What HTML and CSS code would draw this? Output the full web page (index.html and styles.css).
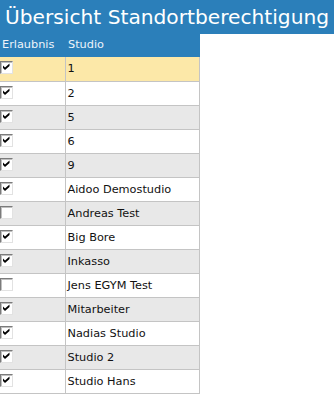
FILE: index.html
```html
<!DOCTYPE html>
<html lang="de">
<head>
    <meta charset="UTF-8">
    <title>Übersicht Standortberechtigung</title>
    <link rel="stylesheet" href="styles.css">
</head>
<body>
    <h1 class="page-title">Übersicht Standortberechtigung</h1>
    <table class="grid">
        <thead>
            <tr>
                <th class="col-perm">Erlaubnis</th>
                <th class="col-name">Studio</th>
            </tr>
        </thead>
        <tbody>
            <tr class="selected"><td><span class="cb on"></span></td><td>1</td></tr>
            <tr><td><span class="cb on"></span></td><td>2</td></tr>
            <tr class="alt"><td><span class="cb on"></span></td><td>5</td></tr>
            <tr><td><span class="cb on"></span></td><td>6</td></tr>
            <tr class="alt"><td><span class="cb on"></span></td><td>9</td></tr>
            <tr><td><span class="cb on"></span></td><td>Aidoo Demostudio</td></tr>
            <tr class="alt"><td><span class="cb"></span></td><td>Andreas Test</td></tr>
            <tr><td><span class="cb on"></span></td><td>Big Bore</td></tr>
            <tr class="alt"><td><span class="cb on"></span></td><td>Inkasso</td></tr>
            <tr><td><span class="cb"></span></td><td>Jens EGYM Test</td></tr>
            <tr class="alt"><td><span class="cb on"></span></td><td>Mitarbeiter</td></tr>
            <tr><td><span class="cb on"></span></td><td>Nadias Studio</td></tr>
            <tr class="alt"><td><span class="cb on"></span></td><td>Studio 2</td></tr>
            <tr><td><span class="cb on"></span></td><td>Studio Hans</td></tr>
        </tbody>
    </table>
</body>
</html>
```

FILE: styles.css
```css
/* Grundlayout */
* {
    box-sizing: border-box;
    margin: 0;
    padding: 0;
}

body {
    font-family: "DejaVu Sans", Verdana, sans-serif;
    font-size: 11.3px;
    color: #111;
    background: #fff;
}

/* Titelleiste */
.page-title {
    background: #2b7fba;
    color: #fff;
    font-weight: normal;
    font-size: 20.2px;
    height: 34px;
    line-height: 34px;
    padding-left: 5px;
    white-space: nowrap;
}

/* Tabelle */
.grid {
    border-collapse: collapse;
    width: 200px;
}

.grid th {
    background: #2b7fba;
    color: #eef4fa;
    font-weight: normal;
    text-align: left;
    height: 23px;
    padding: 0 0 2px 2px;
}

.grid th.col-name {
    padding-left: 3px;
}

.grid .col-perm {
    width: 65px;
}

.grid td {
    height: 24px;
    border-bottom: 1px solid #c4c4c4;
    border-right: 1px solid #c4c4c4;
    padding: 0 0 0 2px;
    vertical-align: middle;
}

.grid td:first-child {
    padding: 0;
    vertical-align: top;
}

.grid tr.alt td {
    background: #e8e8e8;
}

.grid tr.selected td {
    background: #fce8a8;
}

/* Checkbox im klassischen Stil */
.cb {
    display: block;
    width: 13px;
    height: 13px;
    margin-top: 4px;
    background: #fff;
    border-top: 1px solid #7b7b7b;
    border-left: 1px solid #7b7b7b;
    border-right: 1px solid #e2e2e2;
    border-bottom: 1px solid #e2e2e2;
    box-shadow: inset 1px 1px 0 #c0c0c0;
}

.cb.on {
    background: #fff url("data:image/svg+xml,%3Csvg xmlns='http://www.w3.org/2000/svg' width='11' height='11'%3E%3Cpath d='M2 3.5 L4 5.5 L8.5 1.5 L8.5 4 L4 8 L2 6 Z' fill='%23000'/%3E%3C/svg%3E") no-repeat 0 0;
}
```
